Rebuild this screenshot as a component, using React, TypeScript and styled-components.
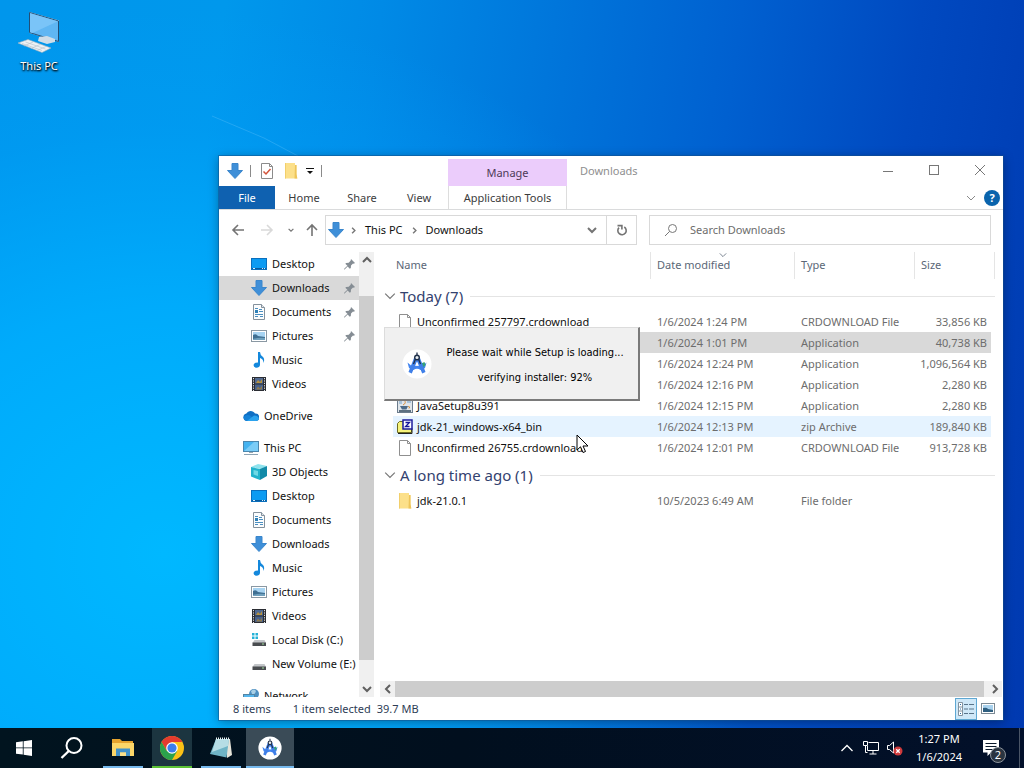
import React, { FunctionComponent, ReactNode } from "react"
import styled, { createGlobalStyle, css } from "styled-components"

interface NavEntry {
  label: string
  icon: ReactNode
  root?: boolean
  pinned?: boolean
  selected?: boolean
}

interface FileEntry {
  name: string
  icon: ReactNode
  date: string
  type: string
  size: string
  state?: "selected" | "hover"
}

/* icons */

const DownArrow = () => (
  <svg width="16" height="16" viewBox="0 0 16 16">
    <path d="M5 .5h6v7h4.500L8 15.500.5 7.500H5z" fill="#3f8fd8" stroke="#3a86cc" />
  </svg>
)

const DesktopIcon = () => (
  <svg width="16" height="16" viewBox="0 0 16 16">
    <rect x=".5" y="2.500" width="15" height="11" fill="#0c9bf2" stroke="#0a6fbd" />
    <path d="M1 12.500h14" stroke="#075a9c" />
    <path d="M2 12.500h2m7 0h1m1 0h1" stroke="#d8efff" />
  </svg>
)

const DocumentIcon = () => (
  <svg width="16" height="16" viewBox="0 0 16 16">
    <path d="M2.500.5h8l3 3v12h-11z" fill="#fbfcfd" stroke="#84919c" />
    <path d="M10.500.5v3h3" fill="#dfe5ea" stroke="#84919c" />
    <path d="M4 4.500h3M8 5.500h3M8 7.500h4M4 10.500h8M4 12.500h3M9 12.500h3" stroke="#4b8fc0" />
    <rect x="4" y="6" width="3" height="3" fill="#2e80b8" />
  </svg>
)

const PictureIcon = () => (
  <svg width="16" height="16" viewBox="0 0 16 16">
    <rect x=".5" y="2.500" width="15" height="11" fill="#fff" stroke="#8a98a3" />
    <rect x="2" y="4" width="12" height="8" fill="#a8d4f2" />
    <path d="M2 7q3-2 5 1l7 1v3H2z" fill="#3f6f92" />
    <path d="M2 11q5-2 12-1v2H2z" fill="#6fa0bd" />
  </svg>
)

const MusicIcon = () => (
  <svg width="16" height="16" viewBox="0 0 16 16">
    <path d="M7 0h2q0 3 3 5 2 2 .5 6 0-4-3.500-5v7q-.5 2.800-3.500 2.800Q2.500 15.500 2.500 13q.5-2.500 4.500-2.500z" fill="#1488dc" />
  </svg>
)

const VideoIcon = () => (
  <svg width="16" height="16" viewBox="0 0 16 16">
    <rect x="1" y="1" width="14" height="14" fill="#2b2d33" />
    <path d="M2.500 2v13M13.500 2v13" stroke="#dfe2e6" strokeDasharray="1.200 1.200" />
    <rect x="4" y="2" width="8" height="5.500" fill="#516a92" />
    <rect x="4" y="8.500" width="8" height="5.500" fill="#47618c" />
    <path d="M5 7l2-3 2 2 2-3v4z" fill="#b7923f" />
    <path d="M5 13.500l2-3 2 2 2-3v4z" fill="#8f7a4c" />
  </svg>
)

const CloudIcon = () => (
  <svg width="16" height="16" viewBox="0 0 16 16">
    <path d="M4 13a3.800 3.800 0 0 1-.6-7.500A5 5 0 0 1 12 5.500 3.700 3.700 0 0 1 13 13z" fill="#0f6fc4" />
    <path d="M3.500 13Q.8 12 .3 9.500 3 6 7 7.500l6 5.500z" fill="#1482d8" />
    <path d="M4 13L11 7.500q4 0 5 3-.7 2.500-3 2.500z" fill="#2ba3ee" />
  </svg>
)

const ComputerIcon = () => (
  <svg width="16" height="16" viewBox="0 0 16 16">
    <rect x=".5" y="1.500" width="15" height="10" fill="#45b3f0" stroke="#4b86ad" />
    <path d="M1 11L11 2h4v9z" fill="#7accf7" />
    <path d="M6 12.500h4" stroke="#9aa7b0" />
    <path d="M1 14.500h14" stroke="#8da3b3" />
  </svg>
)

const CubeIcon = () => (
  <svg width="16" height="16" viewBox="0 0 16 16">
    <path d="M0 3l7-3 9 2-6 3z" fill="#8fe3ee" />
    <path d="M0 3l9 2v11l-9-3.500z" fill="#22b3cc" />
    <path d="M9 5l7-3v10l-7 4z" fill="#128aa8" />
    <path d="M2.500 6l4.500 1v5l-4.500-1.500z" fill="#6fd9e6" />
  </svg>
)

const DriveIcon = ({ system }: { system?: boolean }) => (
  <svg width="16" height="16" viewBox="0 0 16 16">
    {system && <path d="M1 1h2.500v2.500H1zM4.500 1H7v2.500H4.500zM1 4.500h2.500V7H1zM4.500 4.500H7V7H4.500z" fill="#25b2d8" />}
    <path d="M3.500 8h10l1.500 3H1.500z" fill="#c3c6c9" />
    <rect x="1.500" y="10.500" width="13.500" height="3.500" fill="#4a4d50" />
    <rect x="11" y="11.500" width="2" height="1" fill="#9fe09c" />
  </svg>
)

const NetworkIcon = () => (
  <svg width="16" height="16" viewBox="0 0 16 16">
    <circle cx="11" cy="6" r="5" fill="#4d8fc0" />
    <path d="M8 3q3-3 5 0-1 4-4 3z" fill="#a7cfe6" />
    <rect x=".5" y="6.500" width="11" height="7" fill="#55b5ec" stroke="#5384a3" />
  </svg>
)

const PinIcon = () => (
  <svg width="11" height="11" viewBox="0 0 11 11">
    <path d="M7 0l4 4-1.200.8-.8-.2L7 6.500 6.800 9 5.800 9.800 3.600 7.500.6 10.600 0 10.400l.4-.8L3.400 6.800 1.300 4.800 2.200 4l2.500-.2 1.900-2z" fill="#858d94" />
  </svg>
)

const FileIcon = () => (
  <svg width="14" height="16" viewBox="0 0 14 16">
    <path d="M1.500.5h8l3 3v12h-11z" fill="#fff" stroke="#8f8f8f" />
    <path d="M9.500.5v3h3" fill="none" stroke="#8f8f8f" />
  </svg>
)

const FolderIcon = () => (
  <svg width="14" height="16" viewBox="0 0 14 16">
    <path d="M1 0h10v2h1.500v9l.8 4.500H1z" fill="#fce08a" />
    <path d="M11 2h1.500v9l.8 4.500H10.500z" fill="#eec55a" />
    <path d="M1 0h1v15.500H1z" fill="#f2cf6b" />
  </svg>
)

const CheckedDocIcon = () => (
  <svg width="12" height="16" viewBox="0 0 12 16">
    <path d="M.5.5h8l3 3v12H.5z" fill="#fff" stroke="#8b8b8b" />
    <path d="M8.500.5v3h3" fill="none" stroke="#8b8b8b" />
    <path d="M2.500 8.500l2.500 2.500 4.500-5" fill="none" stroke="#d3543b" strokeWidth="1.500" />
  </svg>
)

const InstallerIcon = () => (
  <svg width="16" height="16" viewBox="0 0 16 16">
    <rect x=".5" y=".5" width="15" height="14" fill="#dfe5ea" stroke="#6b7c8d" />
    <path d="M2 3h3v3H2zM10 2h4v3h-4z" fill="#a9c3da" />
    <path d="M3 8h8l-1.500 3.500H5z" fill="#4d6b88" />
    <path d="M6 7q4-2 1-5M11 8.500q3 0 1 2" fill="none" stroke="#d98e3a" />
    <path d="M2 13h12" stroke="#31475c" strokeWidth="1.500" />
  </svg>
)

const ZipIcon = () => (
  <svg width="16" height="16" viewBox="0 0 16 16">
    <path d="M.5 4.500l2-2h4V8h8v5.500H.5z" fill="#f6f37c" stroke="#6d6c22" />
    <path d="M1 14.500h14v-5" fill="none" stroke="#222" />
    <rect x="6" y="1" width="9" height="9" fill="#fff" stroke="#1b1b9c" strokeWidth="1.500" />
    <path d="M8.500 3.500h4l-4 4h4" fill="none" stroke="#16169a" strokeWidth="1.300" />
  </svg>
)

const StudioIcon = ({ size }: { size: number }) => (
  <svg width={size} height={size} viewBox="0 0 30 30">
    <circle cx="15" cy="15" r="14.500" fill="#fff" />
    <path d="M5.500 13.500L9 16.500h12l3.500-3-1.500 5.500-3.500 2h-9L7 19z" fill="#4285f0" />
    <path d="M19 14.500l3.500-1.500 1 3-3 3.500z" fill="#35a376" />
    <path d="M12.200 8.500h5.600L23.500 23l-3.300 1.500L15 13l-5.200 11.500L6.500 23z" fill="#3f7fe8" />
    <path d="M15 12.500l1.800 4.200h-3.600z" fill="#fff" />
    <path d="M11.500 21q3.500-2.600 7 0l1 2.500h-9z" fill="#fff" />
    <path d="M15 3.500v2.500M13.500 10l-2 5M16.500 10l2 5" stroke="#20304a" strokeWidth="1.300" />
    <circle cx="15" cy="8.500" r="2.300" fill="#e8eef2" stroke="#20304a" strokeWidth="1.400" />
  </svg>
)

interface ChevronProps {
  to: "up" | "down" | "left" | "right"
  size?: number
  weight?: number
}

const chevronPaths = {
  up: "M1 7l4-4 4 4",
  down: "M1 3l4 4 4-4",
  left: "M7 1L3 5l4 4",
  right: "M3 1l4 4-4 4",
}

const Chevron: FunctionComponent<ChevronProps> = ({ to, size = 10, weight = 1 }) => (
  <svg width={size} height={size} viewBox="0 0 10 10" fill="none" stroke="currentColor" strokeWidth={weight}>
    <path d={chevronPaths[to]} />
  </svg>
)

const Arrow = ({ to }: { to: "left" | "right" | "up" }) => (
  <svg width="14" height="14" viewBox="0 0 14 14" fill="none" stroke="currentColor" strokeWidth="1.600">
    {to === "left" && <path d="M13 7H2m5-5L2 7l5 5" />}
    {to === "right" && <path d="M1 7h11M7 2l5 5-5 5" />}
    {to === "up" && <path d="M7 13V2M2 7l5-5 5 5" />}
  </svg>
)

/* data */

const navEntries: NavEntry[] = [
  { label: "Desktop", icon: <DesktopIcon />, pinned: true },
  { label: "Downloads", icon: <DownArrow />, pinned: true, selected: true },
  { label: "Documents", icon: <DocumentIcon />, pinned: true },
  { label: "Pictures", icon: <PictureIcon />, pinned: true },
  { label: "Music", icon: <MusicIcon /> },
  { label: "Videos", icon: <VideoIcon /> },
  { label: "OneDrive", icon: <CloudIcon />, root: true },
  { label: "This PC", icon: <ComputerIcon />, root: true },
  { label: "3D Objects", icon: <CubeIcon /> },
  { label: "Desktop", icon: <DesktopIcon /> },
  { label: "Documents", icon: <DocumentIcon /> },
  { label: "Downloads", icon: <DownArrow /> },
  { label: "Music", icon: <MusicIcon /> },
  { label: "Pictures", icon: <PictureIcon /> },
  { label: "Videos", icon: <VideoIcon /> },
  { label: "Local Disk (C:)", icon: <DriveIcon system /> },
  { label: "New Volume (E:)", icon: <DriveIcon /> },
  { label: "Network", icon: <NetworkIcon />, root: true },
]

const groups: { title: string; files: FileEntry[] }[] = [
  {
    title: "Today (7)",
    files: [
      { name: "Unconfirmed 257797.crdownload", icon: <FileIcon />, date: "1/6/2024 1:24 PM", type: "CRDOWNLOAD File", size: "33,856 KB" },
      { name: "", icon: null, date: "1/6/2024 1:01 PM", type: "Application", size: "40,738 KB", state: "selected" },
      { name: "", icon: null, date: "1/6/2024 12:24 PM", type: "Application", size: "1,096,564 KB" },
      { name: "", icon: null, date: "1/6/2024 12:16 PM", type: "Application", size: "2,280 KB" },
      { name: "JavaSetup8u391", icon: <InstallerIcon />, date: "1/6/2024 12:15 PM", type: "Application", size: "2,280 KB" },
      { name: "jdk-21_windows-x64_bin", icon: <ZipIcon />, date: "1/6/2024 12:13 PM", type: "zip Archive", size: "189,840 KB", state: "hover" },
      { name: "Unconfirmed 26755.crdownload", icon: <FileIcon />, date: "1/6/2024 12:01 PM", type: "CRDOWNLOAD File", size: "913,728 KB" },
    ],
  },
  {
    title: "A long time ago (1)",
    files: [{ name: "jdk-21.0.1", icon: <FolderIcon />, date: "10/5/2023 6:49 AM", type: "File folder", size: "" }],
  },
]

/* sections */

const TitleBar = () => (
  <TitleRow>
    <QuickAccess>
      <DownArrow />
      <Divider />
      <ToolButton aria-label="Properties">
        <CheckedDocIcon />
      </ToolButton>
      <ToolButton aria-label="New folder">
        <FolderIcon />
      </ToolButton>
      <ToolButton aria-label="Customize toolbar" $narrow>
        <svg width="8" height="8" viewBox="0 0 8 8">
          <path d="M0 1.500h8" stroke="#111" />
          <path d="M1 4h6L4 7z" fill="#111" />
        </svg>
      </ToolButton>
      <Divider />
    </QuickAccess>
    <ManageLabel>Manage</ManageLabel>
    <WindowTitle>Downloads</WindowTitle>
    <WindowButton aria-label="Minimize">
      <svg width="12" height="12" viewBox="0 0 12 12">
        <path d="M1 6.500h10" stroke="currentColor" />
      </svg>
    </WindowButton>
    <WindowButton aria-label="Maximize">
      <svg width="12" height="12" viewBox="0 0 12 12">
        <rect x="1.500" y=".5" width="9" height="9" fill="none" stroke="currentColor" />
      </svg>
    </WindowButton>
    <WindowButton aria-label="Close">
      <svg width="12" height="12" viewBox="0 0 12 12">
        <path d="M1 0l10 10M11 0L1 10" stroke="currentColor" />
      </svg>
    </WindowButton>
  </TitleRow>
)

const Ribbon = () => (
  <RibbonRow>
    <FileTab>File</FileTab>
    <RibbonTab>Home</RibbonTab>
    <RibbonTab>Share</RibbonTab>
    <RibbonTab $short>View</RibbonTab>
    <ContextTab>Application Tools</ContextTab>
    <RibbonEnd>
      <ToolButton aria-label="Expand ribbon">
        <Chevron to="down" />
      </ToolButton>
      <HelpButton aria-label="Help">?</HelpButton>
    </RibbonEnd>
  </RibbonRow>
)

const AddressRow = () => (
  <NavigationRow>
    <HistoryButtons>
      <HistoryButton aria-label="Back">
        <Arrow to="left" />
      </HistoryButton>
      <HistoryButton aria-label="Forward" disabled>
        <Arrow to="right" />
      </HistoryButton>
      <HistoryButton aria-label="Recent locations">
        <Chevron to="down" size={6} weight={2} />
      </HistoryButton>
      <HistoryButton aria-label="Up">
        <Arrow to="up" />
      </HistoryButton>
    </HistoryButtons>
    <Fields>
      <AddressBox>
        <DownArrow />
        <Crumbs>
          <Chevron to="right" size={7} weight={2} />
          <Crumb href="#this-pc">This PC</Crumb>
          <Chevron to="right" size={7} weight={2} />
          <Crumb href="#downloads">Downloads</Crumb>
        </Crumbs>
        <AddressButton aria-label="Previous locations">
          <Chevron to="down" weight={2} />
        </AddressButton>
        <AddressButton aria-label="Refresh" $bordered>
          <svg width="12" height="12" viewBox="0 0 12 12" fill="none" stroke="currentColor" strokeWidth="1.600">
            <path d="M8.300 3A4.200 4.200 0 1 1 3 3.600" />
            <path d="M1.500 1.600h4.400v4" />
          </svg>
        </AddressButton>
      </AddressBox>
      <SearchBox>
        <svg width="14" height="14" viewBox="0 0 14 14" fill="none" stroke="#777">
          <circle cx="8.500" cy="5.500" r="4" />
          <path d="M5.500 8.500L1 13" />
        </svg>
        <SearchInput aria-label="Search Downloads" placeholder="Search Downloads" />
      </SearchBox>
    </Fields>
  </NavigationRow>
)

const NavPane = () => (
  <NavColumn>
    <NavList aria-label="Folders">
      {navEntries.map((entry, i) => (
        <NavItem key={i} href="#" $root={entry.root} $selected={entry.selected}>
          {entry.icon}
          <NavLabel>{entry.label}</NavLabel>
          {entry.pinned && <PinIcon />}
        </NavItem>
      ))}
    </NavList>
    <VerticalScroll>
      <ScrollButton aria-label="Scroll up">
        <Chevron to="up" weight={2} />
      </ScrollButton>
      <VerticalThumb />
      <ScrollButton aria-label="Scroll down">
        <Chevron to="down" weight={2} />
      </ScrollButton>
    </VerticalScroll>
  </NavColumn>
)

const FileList = () => (
  <Files>
    <colgroup>
      <NameCol />
      <DateCol />
      <TypeCol />
      <SizeCol />
    </colgroup>
    <thead>
      <tr>
        <HeaderCell $wide>Name</HeaderCell>
        <HeaderCell>
          Date modified
          <SortMark>
            <Chevron to="down" size={8} />
          </SortMark>
        </HeaderCell>
        <HeaderCell>Type</HeaderCell>
        <HeaderCell>Size</HeaderCell>
      </tr>
    </thead>
    {groups.map((group) => (
      <tbody key={group.title}>
        <tr>
          <GroupCell colSpan={4} scope="rowgroup">
            <GroupTitle>
              <Chevron to="down" size={12} />
              {group.title}
              <GroupRule />
            </GroupTitle>
          </GroupCell>
        </tr>
        {group.files.map((file) => (
          <FileRow key={file.date} $state={file.state}>
            <NameCell>
              <FileName>
                <IconSlot>{file.icon}</IconSlot>
                {file.name}
              </FileName>
            </NameCell>
            <FileCell>{file.date}</FileCell>
            <FileCell>{file.type}</FileCell>
            <SizeCell>{file.size}</SizeCell>
          </FileRow>
        ))}
      </tbody>
    ))}
  </Files>
)

const Explorer = () => (
  <Window>
    <TitleBar />
    <Ribbon />
    <AddressRow />
    <Body>
      <NavPane />
      <Main>
        <FileList />
        <HorizontalScroll>
          <ScrollButton aria-label="Scroll left">
            <Chevron to="left" weight={2} />
          </ScrollButton>
          <HorizontalThumb />
          <ScrollButton aria-label="Scroll right">
            <Chevron to="right" weight={2} />
          </ScrollButton>
        </HorizontalScroll>
      </Main>
    </Body>
    <StatusBar>
      <StatusText>8 items</StatusText>
      <StatusText>1 item selected</StatusText>
      <StatusText>39.7 MB</StatusText>
      <ViewButtons>
        <ViewButton aria-label="Details view" $active>
          <svg width="16" height="14" viewBox="0 0 16 14">
            <path d="M.5.5h4v13h-4zM.5 5h4M.5 9h4" fill="#fff" stroke="#8293a0" />
            <path d="M6 2.500h4m1 0h5M6 7h4m1 0h5M6 11.500h4m1 0h5" stroke="#59748a" />
            <path d="M2 2.500h1M2 7h1M2 11.500h1" stroke="#2b6da3" />
          </svg>
        </ViewButton>
        <ViewButton aria-label="Large icons view">
          <svg width="14" height="12" viewBox="0 0 14 12">
            <rect x=".5" y=".5" width="13" height="10" fill="#fff" stroke="#7c8a94" />
            <path d="M2 2h10v7H2z" fill="#a9d2ee" />
            <path d="M2 5q4-1 5 1l5 1v2H2z" fill="#2f5f80" />
          </svg>
        </ViewButton>
      </ViewButtons>
    </StatusBar>
  </Window>
)

const SetupDialog = () => (
  <Dialog role="dialog" aria-label="Setup">
    <StudioIcon size={30} />
    <DialogText>
      <span>Please wait while Setup is loading...</span>
      <span>verifying installer: 92%</span>
    </DialogText>
  </Dialog>
)

const Taskbar = () => (
  <TaskbarRow>
    <TaskButton aria-label="Start">
      <svg width="16" height="16" viewBox="0 0 16 16" fill="#fff">
        <path d="M0 2.300L6.800 1.300v6.200H0zM7.600 1.200L16 0v7.500H7.600zM0 8.300h6.800v6.300L0 13.700zM7.600 8.300H16V16l-8.400-1.200z" />
      </svg>
    </TaskButton>
    <TaskButton aria-label="Search">
      <svg width="24" height="24" viewBox="0 0 24 24" fill="none" stroke="#fff" strokeWidth="2">
        <circle cx="14" cy="9.500" r="7.500" />
        <path d="M8.800 15L1.500 22" strokeWidth="2.400" />
      </svg>
    </TaskButton>
    <TaskApps>
      <TaskButton aria-label="File Explorer" $bar="#76b9ed">
        <svg width="22" height="20" viewBox="0 0 22 20">
          <path d="M0 1h8l2 2h11v5H0z" fill="#e5a32e" />
          <path d="M0 5h22v13H0z" fill="#fbd668" />
          <path d="M4 18v-7.500h14V18h-4v-3.500H8V18z" fill="#4191c9" />
          <path d="M8 14.500h6V18H8z" fill="#fbe08a" />
        </svg>
      </TaskButton>
      <TaskButton aria-label="Chrome" $bar="#5cc235" $tint="#1c3540">
        <svg width="24" height="24" viewBox="0 0 24 24">
          <circle cx="12" cy="12" r="12" fill="#fbc116" />
          <path d="M1.600 6A12 12 0 0 1 22.400 6H12l-5.200 9z" fill="#e33b2e" />
          <path d="M1.600 6A12 12 0 0 0 12 24l5.200-9H6.800z" fill="#2ba24c" />
          <circle cx="12" cy="12" r="5.800" fill="#fff" />
          <circle cx="12" cy="12" r="4.600" fill="#3b7ded" />
        </svg>
      </TaskButton>
      <TaskButton aria-label="Notepad" $bar="#76b9ed">
        <svg width="24" height="22" viewBox="0 0 24 22">
          <path d="M18 2h3l2 16-5 3z" fill="#e6e4da" />
          <path d="M7 2h13l-2.500 18.500L1 17z" fill="#6fb4c6" />
          <path d="M7 2h13l-1 7L3 15z" fill="#b6dde5" />
          <path d="M7 1.500h14" stroke="#eef3f4" strokeWidth="2" strokeDasharray="1 1" />
        </svg>
      </TaskButton>
      <TaskButton aria-label="Android Studio Setup" $bar="#76b9ed" $tint="#3a4b57" $wideBar>
        <StudioIcon size={24} />
      </TaskButton>
    </TaskApps>
    <Tray>
      <TrayButton aria-label="Show hidden icons">
        <svg width="12" height="8" viewBox="0 0 12 8" fill="none" stroke="#fff" strokeWidth="1.300">
          <path d="M.5 7L6 1.500 11.500 7" />
        </svg>
      </TrayButton>
      <TrayButton aria-label="Network">
        <svg width="17" height="14" viewBox="0 0 17 14" fill="none" stroke="#fff">
          <path d="M5.500 1.500h10v8H4.500V5M10 10v3M6.500 13h7" />
          <path d="M.5.5h4v4h-4zM2.500 5v6.500h2" />
        </svg>
      </TrayButton>
      <TrayButton aria-label="Volume muted">
        <svg width="18" height="15" viewBox="0 0 18 15">
          <path d="M1.500 4.500h2l4-3.500v11l-4-3.500h-2z" fill="none" stroke="#fff" />
          <circle cx="12" cy="10" r="4.500" fill="#cf3a3c" />
          <path d="M10.300 8.300l3.400 3.400M13.700 8.300l-3.400 3.400" stroke="#fff" strokeWidth="1.300" />
        </svg>
      </TrayButton>
      <Clock dateTime="2024-01-06T13:27">
        <span>1:27 PM</span>
        <span>1/6/2024</span>
      </Clock>
      <NoticeButton aria-label="Notifications">
        <svg width="16" height="17" viewBox="0 0 16 17">
          <path d="M0 0h16v12.500H8L4.500 16v-3.500H0z" fill="#fff" />
          <path d="M2.500 3.500h11M2.500 6.500h11M2.500 9.500h7" stroke="#0b1a2c" />
        </svg>
        <NoticeCount>2</NoticeCount>
      </NoticeButton>
      <ShowDesktop aria-label="Show desktop" />
    </Tray>
  </TaskbarRow>
)

export default function App() {
  return (
    <Screen>
      <GlobalStyle />
      <Desktop>
        <LightBeam viewBox="0 0 320 170" width="320" height="170">
          <path d="M212 116l52 22 34 18" fill="none" stroke="#7dd0ff" opacity=".35" strokeWidth=".8" />
        </LightBeam>
        <Shortcut>
          <svg width="44" height="44" viewBox="0 0 44 44">
            <path d="M12.500 2L42 10.500V32L12.500 23z" fill="#d9e3ea" />
            <path d="M12.500 2.500L41.500 11v20.500L12.500 22.500z" fill="#5fb6f3" stroke="#214f78" />
            <path d="M13 3l28 8.200-26 12L13 22z" fill="#86cbf9" opacity=".7" />
            <path d="M22 27l8-1 8 3v3l-8 2-9-3z" fill="#cfdde8" />
            <path d="M1 33l10-3.500L34 38l-9 4.500z" fill="#edf1f4" stroke="#9fb0bd" strokeWidth=".6" />
            <path d="M5 33.500l20 7M8.500 32l20 7M7 36l9-4M14 38.500l9-4M20 40.500l9-4" stroke="#b4c0ca" strokeWidth=".6" />
          </svg>
          This PC
        </Shortcut>
        <Explorer />
        <SetupDialog />
        <Cursor width="13" height="20" viewBox="0 0 13 20">
          <path d="M1 1v15l3.500-3.200L7 18.500l2.500-1-2.500-5.500h5z" fill="#fff" stroke="#000" />
        </Cursor>
      </Desktop>
      <Taskbar />
    </Screen>
  )
}

const GlobalStyle = createGlobalStyle`
  * {
    box-sizing: border-box;
  }

  body {
    margin: 0;
    font: 11px/16px "Noto Sans", "Open Sans", sans-serif;
    color: #111;
  }

  button, input {
    font: inherit;
    color: inherit;
    background: none;
    border: 0;
    padding: 0;
  }

  a {
    color: inherit;
    text-decoration: none;
  }

  svg {
    display: block;
    flex: none;
  }
`

const Screen = styled.div`
  display: flex;
  flex-direction: column;
  min-height: 100vh;
`

const Desktop = styled.main`
  flex: 1;
  position: relative;
  min-height: 600px;
  overflow: hidden;
  background:
    radial-gradient(ellipse 60% 75% at 16% 76%, #00b8ff 0%, rgb(0 176 255 / 0.8) 45%, rgb(0 160 250 / 0.3) 78%, transparent 100%),
    linear-gradient(98deg, #0096ec 0%, #0098ec 20%, #008ae6 34%, #0078dc 48%, #0060d0 66%, #0049c0 82%, #0039b0 100%);
`

const LightBeam = styled.svg`
  position: absolute;
  left: 0;
  top: 0;
`

const Shortcut = styled.button`
  position: absolute;
  left: 2px;
  top: 10px;
  width: 74px;
  display: flex;
  flex-direction: column;
  align-items: center;
  gap: 4px;
  color: white;
  text-shadow: 0 1px 2px black, 1px 1px 2px black;
`

const Window = styled.section`
  position: absolute;
  left: 219px;
  top: 156px;
  right: 21px;
  bottom: 8px;
  display: flex;
  flex-direction: column;
  background: white;
  box-shadow: 0 0 0 1px rgb(20 80 140 / 0.5), 0 2px 10px rgb(0 0 0 / 0.35);
`

const TitleRow = styled.header`
  display: flex;
  height: 30px;
`

const QuickAccess = styled.div`
  width: 229px;
  padding-left: 8px;
  display: flex;
  align-items: center;
  gap: 7px;
`

const Divider = styled.span`
  width: 1px;
  height: 12px;
  background: #8a8a8a;
`

const ToolButton = styled.button<{ $narrow?: boolean }>`
  width: ${({ $narrow }) => ($narrow ? 8 : 17)}px;
  height: 16px;
  display: grid;
  place-items: center;
  color: #8a8a8a;
`

const ManageLabel = styled.div`
  width: 119px;
  margin-top: 3px;
  display: grid;
  place-items: center;
  background: #ebccfb;
  color: #4d3a57;
`

const WindowTitle = styled.h1`
  flex: 1;
  margin: 0;
  padding-left: 13px;
  font-size: 11px;
  font-weight: 400;
  line-height: 30px;
  color: #8f8f8f;
`

const WindowButton = styled.button`
  width: 46px;
  display: grid;
  place-items: center;
  color: #777;
`

const RibbonRow = styled.nav`
  display: flex;
  height: 24px;
  border-bottom: 1px solid #dadbdc;
`

const RibbonTab = styled.button<{ $short?: boolean }>`
  width: ${({ $short }) => ($short ? 56 : 58)}px;
  color: #3b3b3b;
`

const FileTab = styled(RibbonTab)`
  width: 56px;
  background: #0f61b0;
  color: white;
`

const ContextTab = styled(RibbonTab)`
  width: 119px;
  margin-left: 1px;
  border: solid #ddd;
  border-width: 0 1px;
`

const RibbonEnd = styled.div`
  margin-left: auto;
  padding-right: 3px;
  display: flex;
  align-items: center;
  gap: 5px;
`

const HelpButton = styled.button`
  width: 16px;
  height: 16px;
  border-radius: 50%;
  background: #0a64ad;
  color: white;
  font-weight: 700;
`

const NavigationRow = styled.div`
  height: 42px;
  padding: 5px 12px 7px 5px;
  display: flex;
`

const HistoryButtons = styled.div`
  padding-right: 1px;
  display: grid;
  grid-template-columns: 28px 30px 18px 24px;
`

const HistoryButton = styled.button`
  display: grid;
  place-items: center;
  color: #747474;

  &:disabled {
    color: #d9d9d9;
  }
`

const Fields = styled.div`
  flex: 1;
  display: grid;
  grid-template-columns: 312fr 342fr;
  gap: 12px;
`

const boxStyle = css`
  display: flex;
  align-items: center;
  border: 1px solid #d9d9d9;
`

const AddressBox = styled.div`
  ${boxStyle}
  padding-left: 2px;
`

const Crumbs = styled.div`
  flex: 1;
  padding-left: 6px;
  display: flex;
  align-items: center;
  gap: 8px;
  color: #777;
`

const Crumb = styled.a`
  color: #111;
`

const AddressButton = styled.button<{ $bordered?: boolean }>`
  width: 30px;
  align-self: stretch;
  display: grid;
  place-items: center;
  border-left: 1px solid ${({ $bordered }) => ($bordered ? "#d9d9d9" : "transparent")};
  color: #747474;
`

const SearchBox = styled.label`
  ${boxStyle}
  padding-left: 14px;
  gap: 12px;
`

const SearchInput = styled.input`
  flex: 1;
  min-width: 0;
  outline: 0;

  &::placeholder {
    color: #6d6d6d;
    opacity: 1;
  }
`

const Body = styled.div`
  flex: 1;
  min-height: 0;
  display: flex;
`

const NavColumn = styled.aside`
  width: 155px;
  display: flex;
`

const NavList = styled.nav`
  flex: 1;
  overflow: hidden;
`

const NavItem = styled.a<{ $root?: boolean; $selected?: boolean }>`
  height: 24px;
  margin-top: ${({ $root }) => ($root ? 8 : 0)}px;
  padding: 0 4px 0 ${({ $root }) => ($root ? 24 : 32)}px;
  display: flex;
  align-items: center;
  gap: 5px;
  background: ${({ $selected }) => ($selected ? "#d9d9d9" : "none")};
`

const NavLabel = styled.span`
  flex: 1;
  white-space: nowrap;
`

const VerticalScroll = styled.div`
  width: 15px;
  display: flex;
  flex-direction: column;
  background: #f0f0f0;
`

const ScrollButton = styled.button`
  width: 15px;
  height: 16px;
  display: grid;
  place-items: center;
  color: #606060;
`

const VerticalThumb = styled.div`
  flex: 1;
  margin: 28px 0 21px;
  background: #cdcdcd;
`

const Main = styled.div`
  flex: 1;
  min-width: 0;
  display: flex;
  flex-direction: column;
`

const HorizontalScroll = styled.div`
  margin: auto 1px 0 6px;
  height: 16px;
  display: flex;
  background: #f0f0f0;
`

const HorizontalThumb = styled.div`
  flex: 1;
  margin-right: 3px;
  background: #cdcdcd;
`

const Files = styled.table`
  margin: 0 8px 0 10px;
  table-layout: fixed;
  border-spacing: 0;
`

const NameCol = styled.col``

const DateCol = styled.col`
  width: 144px;
`

const TypeCol = styled.col`
  width: 120px;
`

const SizeCol = styled.col`
  width: 80px;
`

const HeaderCell = styled.th<{ $wide?: boolean }>`
  position: relative;
  height: 27px;
  padding: 0 0 1px ${({ $wide }) => ($wide ? 12 : 6)}px;
  border-right: 1px solid #e5e5e5;
  text-align: left;
  font-weight: 400;
  color: #5b6777;
`

const SortMark = styled.span`
  position: absolute;
  left: 50%;
  top: -1px;
  margin-left: -4px;
`

const GroupCell = styled.th`
  height: 32px;
  padding: 2px 0 0;
  font-weight: 400;
`

const GroupTitle = styled.div`
  display: flex;
  align-items: center;
  gap: 4px;
  font-size: 15px;
  line-height: 20px;
  color: #33426f;
  white-space: nowrap;

  svg {
    color: #777;
  }
`

const GroupRule = styled.span`
  flex: 1;
  height: 1px;
  margin-left: 3px;
  background: #e4e4e4;
`

const rowColors = {
  selected: "#d9d9d9",
  hover: "#e5f3ff",
}

const FileRow = styled.tr<{ $state?: "selected" | "hover" }>`
  td {
    background-color: ${({ $state }) => ($state ? rowColors[$state] : "transparent")};
    background-clip: padding-box;
  }
`

const FileCell = styled.td`
  height: 21px;
  padding: 0 0 0 6px;
  color: #6d6d6d;
  white-space: nowrap;
`

const NameCell = styled(FileCell)`
  padding-left: 4px;
  border-left: 9px solid transparent;
  color: #111;
`

const SizeCell = styled(FileCell)`
  padding: 0 4px 0 0;
  border-right: 4px solid transparent;
  text-align: right;
`

const FileName = styled.div`
  display: flex;
  align-items: center;
  gap: 4px;
`

const IconSlot = styled.span`
  width: 16px;
  display: grid;
  place-items: center;
`

const StatusBar = styled.footer`
  height: 23px;
  padding-left: 14px;
  display: flex;
  align-items: center;
  color: #2e3c55;
`

const StatusText = styled.span`
  margin-right: 6px;

  &:first-child {
    margin-right: 22px;
  }
`

const ViewButtons = styled.div`
  margin-left: auto;
  padding-right: 4px;
  display: flex;
`

const ViewButton = styled.button<{ $active?: boolean }>`
  width: 22px;
  height: 22px;
  display: grid;
  place-items: center;
  border: 1px solid ${({ $active }) => ($active ? "#5fa8d3" : "transparent")};
  background: ${({ $active }) => ($active ? "#cfe8f8" : "none")};
`

const Dialog = styled.div`
  position: absolute;
  left: 384px;
  top: 327px;
  width: 256px;
  height: 74px;
  padding-left: 17px;
  display: flex;
  align-items: center;
  background: #f0f0f0;
  border: solid;
  border-width: 1px 2px 2px 1px;
  border-color: #dcdcdc #7a7a7a #7a7a7a #dcdcdc;
  color: black;
  font-family: "DejaVu Sans Condensed", "DejaVu Sans", sans-serif;
`

const DialogText = styled.div`
  flex: 1;
  padding-top: 4px;
  display: flex;
  flex-direction: column;
  align-items: center;
  gap: 9px;
`

const Cursor = styled.svg`
  position: absolute;
  left: 576px;
  top: 434px;
`

const TaskbarRow = styled.footer`
  height: 40px;
  display: flex;
  background: linear-gradient(90deg, #01141f, #010f1e 45%, #02102a);
  color: white;
`

const TaskApps = styled.div`
  margin-left: 3px;
  display: flex;
  gap: 1px;
`

const TaskButton = styled.button<{ $bar?: string; $tint?: string; $wideBar?: boolean }>`
  width: 48px;
  display: grid;
  place-items: center;
  background:
    linear-gradient(${({ $bar }) => $bar ?? "transparent"} 0 0) 50% 100% / ${({ $wideBar }) => ($wideBar ? 48 : 40)}px 2px no-repeat,
    linear-gradient(${({ $tint }) => $tint ?? "transparent"} 0 0) 50% 0 / ${({ $wideBar }) => ($wideBar ? 48 : 40)}px 100% no-repeat;
`

const Tray = styled.div`
  margin-left: auto;
  display: flex;
`

const TrayButton = styled.button`
  width: 24px;
  display: grid;
  place-items: center;
`

const Clock = styled.time`
  width: 64px;
  display: flex;
  flex-direction: column;
  justify-content: center;
  align-items: center;
  line-height: 18px;
`

const NoticeButton = styled.button`
  position: relative;
  width: 48px;
  padding-right: 9px;
  display: grid;
  place-items: center;
`

const NoticeCount = styled.span`
  position: absolute;
  left: 19px;
  top: 19px;
  width: 16px;
  height: 16px;
  border: 1px solid #8d949c;
  border-radius: 50%;
  background: #2a3440;
  line-height: 14px;
`

const ShowDesktop = styled.button`
  width: 5px;
  border-left: 1px solid #4a5566;
`
